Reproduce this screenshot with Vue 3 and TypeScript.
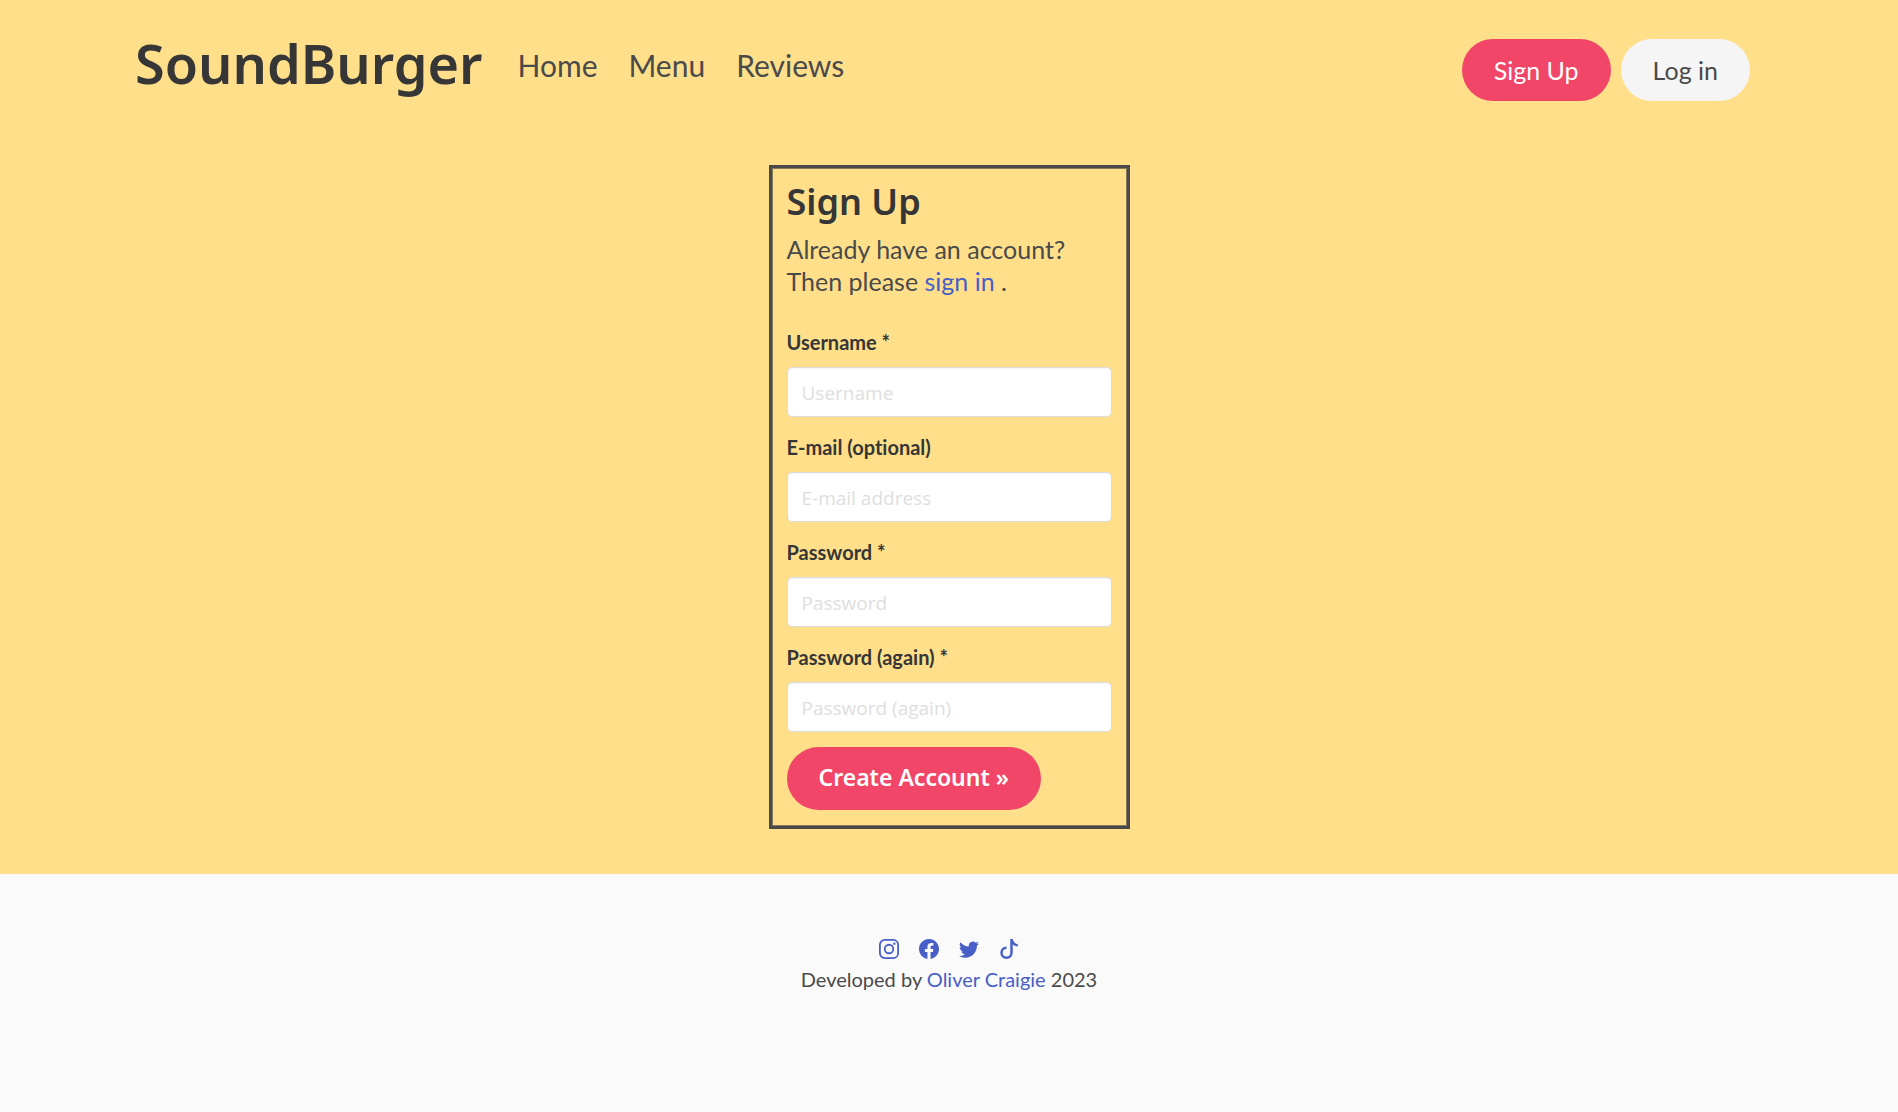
<script setup lang="ts">
import { reactive } from 'vue'

interface Field {
  id: 'username' | 'email' | 'password1' | 'password2'
  label: string
  type: string
  placeholder: string
}

const navLinks: string[] = ['Home', 'Menu', 'Reviews']

const fields: Field[] = [
  { id: 'username', label: 'Username *', type: 'text', placeholder: 'Username' },
  { id: 'email', label: 'E-mail (optional)', type: 'email', placeholder: 'E-mail address' },
  { id: 'password1', label: 'Password *', type: 'password', placeholder: 'Password' },
  { id: 'password2', label: 'Password (again) *', type: 'password', placeholder: 'Password (again)' },
]

const form = reactive({ username: '', email: '', password1: '', password2: '' })
</script>

<template>
  <div class="page">
    <div class="hero">
      <header class="navbar">
        <a href="#" class="brand">SoundBurger</a>
        <nav class="links">
          <a v-for="link in navLinks" :key="link" href="#">{{ link }}</a>
        </nav>
        <div class="actions">
          <a href="#" class="button primary">Sign Up</a>
          <a href="#" class="button light">Log in</a>
        </div>
      </header>

      <main class="card">
        <h1>Sign Up</h1>
        <p class="intro">Already have an account?<br />Then please <a href="#">sign in</a> .</p>
        <form @submit.prevent>
          <div v-for="field in fields" :key="field.id" class="field">
            <label :for="field.id">{{ field.label }}</label>
            <input :id="field.id" v-model="form[field.id]" :type="field.type" :placeholder="field.placeholder" />
          </div>
          <button type="submit" class="button primary submit">Create Account »</button>
        </form>
      </main>
    </div>

    <footer class="footer">
      <div class="social">
        <a href="#" aria-label="Instagram">
          <svg viewBox="0 0 16 16" fill="none" stroke="currentColor" stroke-width="1.44">
            <rect x=".72" y=".72" width="14.56" height="14.56" rx="3.9" />
            <circle cx="8" cy="8" r="3.4" />
            <circle cx="12.27" cy="3.73" r=".96" fill="currentColor" stroke="none" />
          </svg>
        </a>
        <a href="#" aria-label="Facebook">
          <svg viewBox="0 0 16 16" fill="currentColor">
            <path d="M16 8.049c0-4.446-3.582-8.05-8-8.05C3.58 0-.002 3.603-.002 8.05c0 4.017 2.926 7.347 6.75 7.951v-5.625h-2.03V8.05H6.75V6.275c0-2.017 1.195-3.131 3.022-3.131.876 0 1.791.157 1.791.157v1.98h-1.009c-.993 0-1.303.621-1.303 1.258v1.51h2.218l-.354 2.326H9.25V16c3.824-.604 6.75-3.934 6.75-7.951z" />
          </svg>
        </a>
        <a href="#" aria-label="Twitter">
          <svg viewBox="0 0 16 16" fill="currentColor">
            <path d="M5.026 15c6.038 0 9.341-5.003 9.341-9.334 0-.14 0-.282-.006-.422A6.685 6.685 0 0 0 16 3.542a6.658 6.658 0 0 1-1.889.518 3.301 3.301 0 0 0 1.447-1.817 6.533 6.533 0 0 1-2.087.793A3.286 3.286 0 0 0 7.875 6.03a9.325 9.325 0 0 1-6.767-3.429 3.289 3.289 0 0 0 1.018 4.382A3.323 3.323 0 0 1 .64 6.575v.045a3.288 3.288 0 0 0 2.632 3.218 3.203 3.203 0 0 1-.865.115 3.23 3.23 0 0 1-.614-.057 3.283 3.283 0 0 0 3.067 2.277A6.588 6.588 0 0 1 .78 13.58a6.32 6.32 0 0 1-.78-.045A9.344 9.344 0 0 0 5.026 15z" />
          </svg>
        </a>
        <a href="#" aria-label="TikTok">
          <svg viewBox="0 0 16 16" fill="currentColor">
            <path d="M9 0h1.98c.144.715.54 1.617 1.235 2.512C12.895 3.389 13.797 4 15 4v2c-1.753 0-3.07-.814-4-1.829V11a5 5 0 1 1-5-5v2a3 3 0 1 0 3 3V0Z" />
          </svg>
        </a>
      </div>
      <p>Developed by <a href="#">Oliver Craigie</a> 2023</p>
    </footer>
  </div>
</template>

<style>
body {
  margin: 0;
  background: #fafafa;
}
</style>

<style scoped>
.page {
  font-family: Lato, "Liberation Sans", sans-serif;
  font-size: 20px;
  font-variant-ligatures: none;
  line-height: 30px;
  color: #4a4a4a;
}

.page * {
  box-sizing: border-box;
}

a {
  color: #485fc7;
  text-decoration: none;
}

.hero {
  background: #ffdf8a;
  padding-bottom: 45px;
}

.navbar {
  display: flex;
  align-items: center;
  height: 140px;
  padding: 0 148px 0 135px;
}

.brand {
  padding-bottom: 14px;
  font-family: "Noto Sans", sans-serif;
  font-size: 54px;
  font-weight: 600;
  line-height: 60px;
  color: #363636;
}

.links {
  display: flex;
  gap: 31px;
  margin-left: 35px;
  padding-bottom: 10px;
}

.links a {
  font-size: 30px;
  line-height: 40px;
  color: #4a4a4a;
}

.actions {
  display: flex;
  gap: 10px;
  margin-left: auto;
}

.button {
  display: inline-flex;
  align-items: center;
  justify-content: center;
  height: 62px;
  padding: 0 32px;
  border: 0;
  border-radius: 32px;
  font-size: 25px;
  line-height: 38px;
  cursor: pointer;
}

.primary {
  background: #f14668;
  color: #fff;
}

.light {
  background: #f5f5f5;
  color: #4a4a4a;
}

.card {
  width: 19%;
  min-width: 361px;
  margin: 25px auto 0;
  padding: 15px 15px 16px;
  border: 3px solid #4a4a4a;
  box-shadow: inset 0 0 0 1px #857959;
}

h1 {
  margin: 0;
  font-family: "Noto Sans", sans-serif;
  font-size: 36px;
  font-weight: 600;
  line-height: 38px;
  color: #363636;
}

.intro {
  margin: 12px 0 30px;
  font-size: 25px;
  line-height: 32px;
}

.field {
  display: flex;
  flex-direction: column;
  gap: 10px;
  margin-bottom: 15px;
}

label {
  font-weight: 700;
  color: #363636;
}

input {
  width: 100%;
  height: 50px;
  padding: 2px 14px 0;
  border: 1px solid #dbdbdb;
  border-radius: 5px;
  background: #fff;
  box-shadow: inset 0 1px 2px rgba(10, 10, 10, 0.05);
  font-family: "Open Sans", sans-serif;
  font-size: 19px;
  color: #363636;
}

input::placeholder {
  color: #dedede;
  opacity: 1;
}

.submit {
  height: 63px;
  padding-bottom: 4px;
  font-family: "Noto Sans", sans-serif;
  font-size: 23px;
  font-weight: 600;
}

.footer {
  padding: 60px 30px 120px;
  text-align: center;
}

.social {
  display: flex;
  justify-content: center;
  gap: 20px;
}

.social a {
  display: flex;
  align-items: center;
  height: 30px;
}

.social svg {
  width: 20px;
  height: 20px;
}

.footer p {
  margin: 0;
}
</style>
